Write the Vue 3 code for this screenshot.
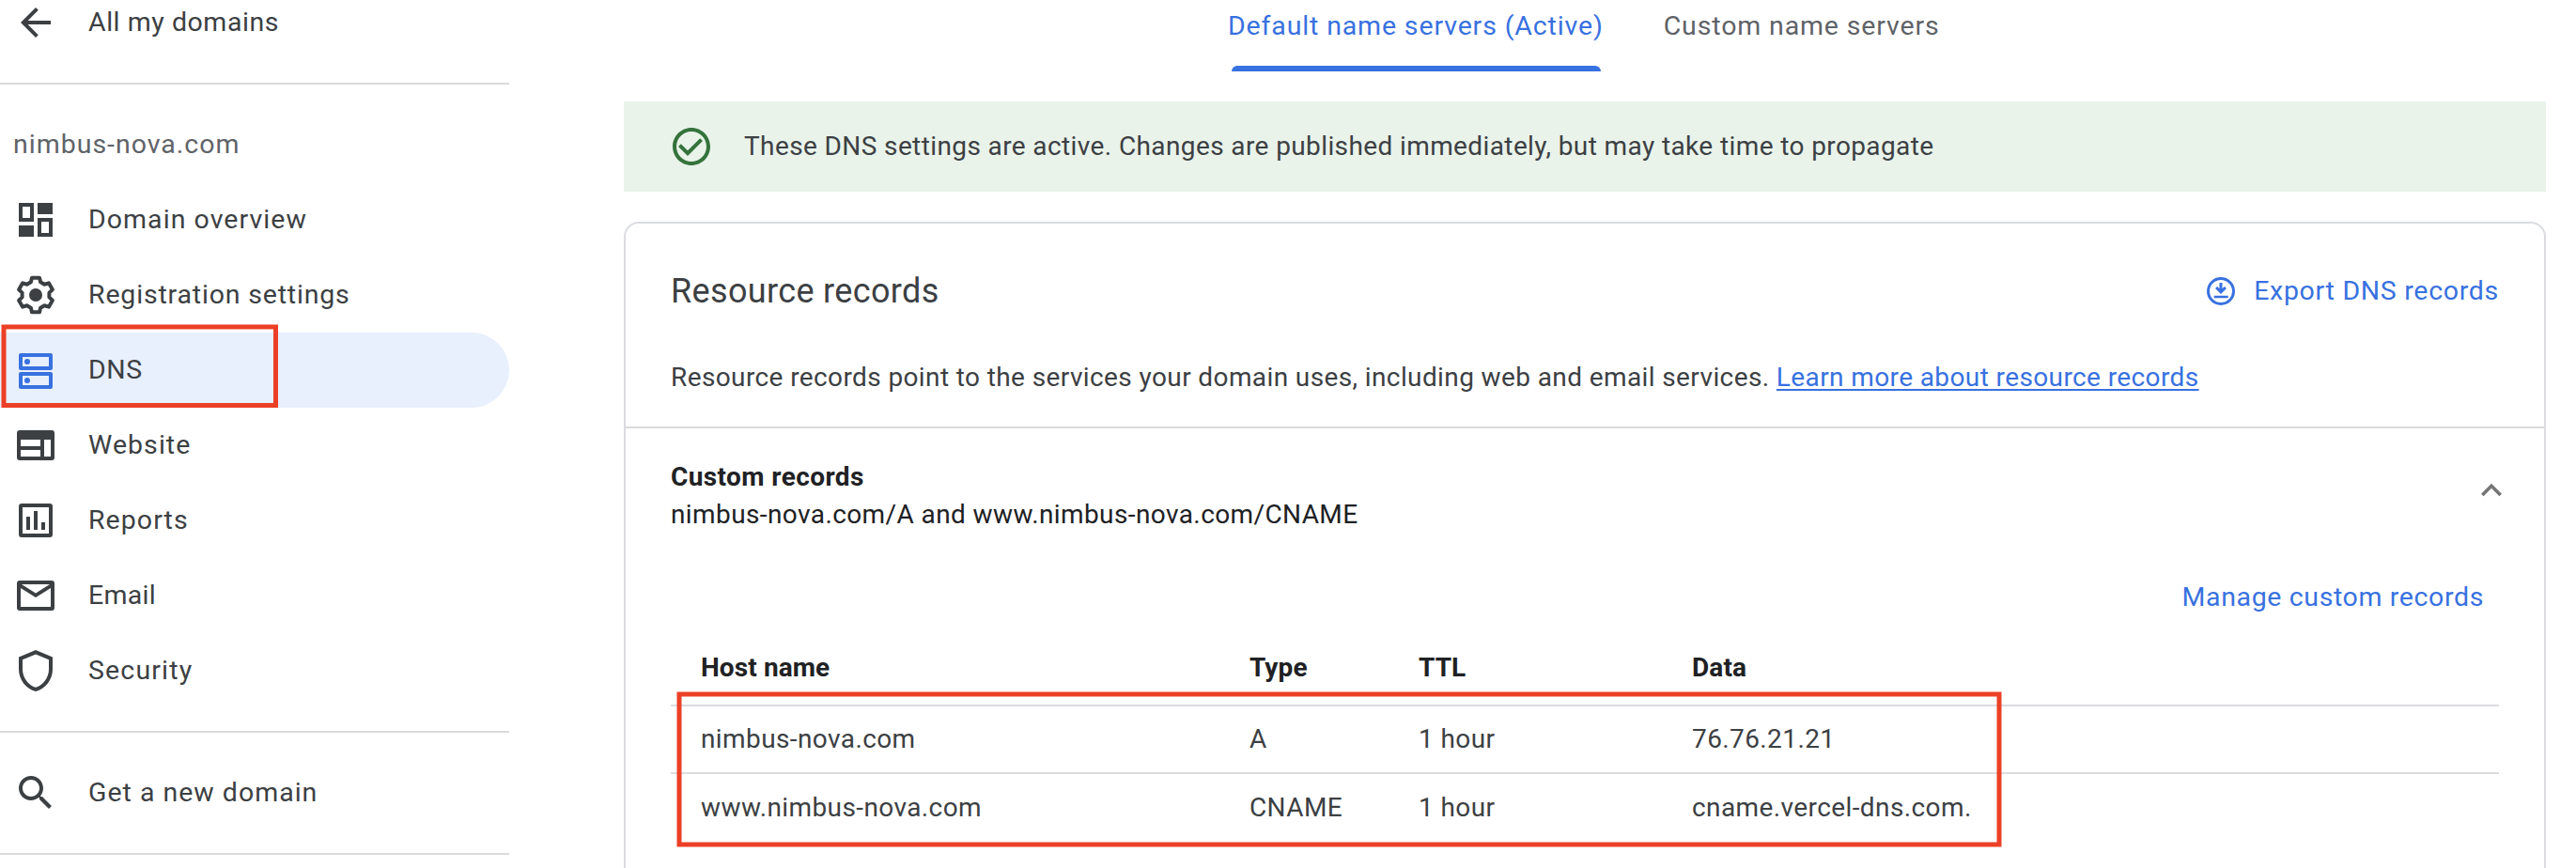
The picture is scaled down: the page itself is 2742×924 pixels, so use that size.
<script setup>
// Six-toothed cog outline, centred in the 24-unit icon box.
const cog = Array.from({ length: 6 }, (_, k) =>
  [[-20.5, 7.3], [-12.4, 9.4], [12.4, 9.4], [20.5, 7.3]].map(([a, r]) => {
    const t = ((k * 60 + a) * Math.PI) / 180
    return `${(12 + r * Math.sin(t)).toFixed(2)},${(12 - r * Math.cos(t)).toFixed(2)}`
  }).join(' ')
).join(' ')

const nav = [
  { id: 'overview', label: 'Domain overview' },
  { id: 'settings', label: 'Registration settings' },
  { id: 'dns', label: 'DNS', active: true },
  { id: 'website', label: 'Website' },
  { id: 'reports', label: 'Reports' },
  { id: 'email', label: 'Email' },
  { id: 'security', label: 'Security' },
]
const icons = {
  overview: 'M3 3h8v10H3zM5 5v6h4V5zM13 3h8v6h-8zM3 15h8v6H3zM13 11h8v10h-8zM15 13v6h4v-6z',
  dns: 'M4 3h16a1 1 0 0 1 1 1v7a1 1 0 0 1-1 1H4a1 1 0 0 1-1-1V4a1 1 0 0 1 1-1zM5 5v5h14V5zM7.5 6a1.5 1.5 0 1 0 0 3 1.5 1.5 0 0 0 0-3zM4 13h16a1 1 0 0 1 1 1v7a1 1 0 0 1-1 1H4a1 1 0 0 1-1-1v-7a1 1 0 0 1 1-1zM5 15v5h14v-5zM7.5 16a1.5 1.5 0 1 0 0 3 1.5 1.5 0 0 0 0-3z',
  website: 'M20.500 4h-17C2.500 4 2 4.500 2 5.500v13c0 1 .5 1.500 1.500 1.500h17c1 0 1.500-.5 1.500-1.500v-13c0-1-.5-1.500-1.500-1.500zM14.500 18H4v-3.500h10.500zM14.500 12.500H4V9h10.500zM20 18h-3.500V9H20z',
  reports: 'M19.500 3h-15C3.500 3 3 3.500 3 4.500v15c0 1 .5 1.500 1.500 1.500h15c1 0 1.500-.5 1.500-1.500v-15c0-1-.5-1.500-1.500-1.500zM19 19H5V5h14zM7 10h2v7H7zM11 7h2v10h-2zM15 13h2v4h-2z',
  email: 'M20.500 4h-17C2.500 4 2 4.500 2 5.500v13c0 1 .5 1.500 1.500 1.500h17c1 0 1.500-.5 1.500-1.500v-13c0-1-.5-1.500-1.500-1.500zM20 18H4V8l8 5 8-5zM12 10.700L4.500 6h15z',
  security: 'M12 1L3 4.700v6.500c0 5.400 3.800 10.500 9 11.800 5.200-1.300 9-6.400 9-11.800V4.700zM12 3.200l7 2.900v5.100c0 4.300-3 8.400-7 9.700-4-1.300-7-5.400-7-9.700V6.100z',
}
const records = [
  { host: 'nimbus-nova.com', type: 'A', ttl: '1 hour', data: '76.76.21.21' },
  { host: 'www.nimbus-nova.com', type: 'CNAME', ttl: '1 hour', data: 'cname.vercel-dns.com.' },
]
</script>

<template>
  <div class="page">
    <aside class="sidebar">
      <div class="item">
        <svg class="icon" viewBox="0 0 24 24"><path d="M20 11H7.830l5.590-5.590L12 4l-8 8 8 8 1.410-1.410L7.830 13H20z" /></svg>
        <span class="t-back">All my domains</span>
      </div>
      <hr />
      <div class="domain"><span>nimbus-nova.com</span></div>
      <nav>
        <div v-for="n in nav" :key="n.id" class="item" :class="{ active: n.active }">
          <svg v-if="n.id === 'settings'" class="icon" viewBox="0 0 24 24">
            <polygon class="cog" :points="cog" /><circle cx="12" cy="12" r="3.500" />
          </svg>
          <svg v-else class="icon" viewBox="0 0 24 24"><path fill-rule="evenodd" :d="icons[n.id]" /></svg>
          <span :class="'t-' + n.id">{{ n.label }}</span>
          <svg v-if="n.active" class="mark mark-nav" viewBox="0 0 296 90"><rect x="4" y="4" width="289.500" height="83.500" /></svg>
        </div>
      </nav>
      <hr />
      <div class="item">
        <svg class="icon" viewBox="0 0 24 24"><path d="M15.500 14h-.79l-.28-.27C15.410 12.590 16 11.110 16 9.500 16 5.910 13.090 3 9.500 3S3 5.910 3 9.500 5.910 16 9.500 16c1.610 0 3.090-.59 4.230-1.570l.27.28v.79l5 4.990L20.490 19l-4.990-5zm-6 0C7.010 14 5 11.990 5 9.500S7.010 5 9.500 5 14 7.010 14 9.500 11.990 14 9.500 14z" /></svg>
        <span class="t-get">Get a new domain</span>
      </div>
      <hr />
    </aside>

    <main>
      <div class="tabs">
        <div class="tab selected"><span>Default name servers (Active)</span></div>
        <div class="tab"><span>Custom name servers</span></div>
      </div>

      <div class="banner">
        <svg viewBox="0 0 24 24"><path d="M16.590 7.580L10 14.170l-3.590-3.580L5 12l5 5 8-8zM12 2C6.480 2 2 6.480 2 12s4.480 10 10 10 10-4.480 10-10S17.520 2 12 2zm0 18c-4.420 0-8-3.580-8-8s3.580-8 8-8 8 3.580 8 8-3.580 8-8 8z" /></svg>
        <span>These DNS settings are active. Changes are published immediately, but may take time to propagate</span>
      </div>

      <section class="card">
        <header>
          <div class="title-row">
            <h1>Resource records</h1>
            <a class="export">
              <svg viewBox="0 0 24 24"><path d="M12 2a10 10 0 1 0 0 20 10 10 0 0 0 0-20zm0 18a8 8 0 1 1 0-16 8 8 0 0 1 0 16zM11 6h2v4.200l1.600-1.600L16 10l-4 4-4-4 1.400-1.400 1.600 1.600zM7.100 15.200h10v1.600h-10z" /></svg>
              <span>Export DNS records</span>
            </a>
          </div>
          <p>Resource records point to the services your domain uses, including web and email services. <a class="learn">Learn more about resource records</a></p>
        </header>

        <div class="summary">
          <div>
            <h2>Custom records</h2>
            <div class="sub">nimbus-nova.com/A and www.nimbus-nova.com/CNAME</div>
          </div>
          <svg class="chev" viewBox="0 0 24 24"><path d="M12 8l-6 6 1.410 1.410L12 10.830l4.590 4.580L18 14z" /></svg>
        </div>

        <div class="manage"><span>Manage custom records</span></div>

        <div class="table">
          <div class="row head">
            <span>Host name</span><span>Type</span><span>TTL</span><span>Data</span>
          </div>
          <div v-for="r in records" :key="r.host" class="row">
            <span>{{ r.host }}</span><span>{{ r.type }}</span><span>{{ r.ttl }}</span><span>{{ r.data }}</span>
          </div>
          <svg class="mark mark-table" viewBox="0 0 1411 166"><rect x="3" y="3" width="1405" height="160" /></svg>
        </div>
      </section>
    </main>
  </div>
</template>

<style>
body { background: #fff; }
</style>

<style scoped>
.page {
  width: 2742px;
  height: 924px;
  overflow: hidden;
  display: flex;
  font-family: Roboto, "Liberation Sans", sans-serif;
  font-size: 28px;
  line-height: 40px;
  color: #3c4043;
  white-space: nowrap;
}
.sidebar { width: 542px; margin-top: -16px; flex: none; font-weight: 450; }
.item { position: relative; height: 80px; display: flex; align-items: center; padding-left: 14px; box-sizing: border-box; }
.item span { margin-left: 32px; font-size: 28.5px; letter-spacing: 1.050px; }
.item .t-back { letter-spacing: 0.550px; }
.item .t-settings { letter-spacing: 0.820px; }
.item .t-dns { letter-spacing: 0.550px; }
.item .t-email { letter-spacing: 0.3px; }
.item .t-security { letter-spacing: 1.150px; }
.item .t-get { letter-spacing: 1px; }
.icon { width: 48px; height: 48px; fill: #3c4043; flex: none; }
.cog { fill: none; stroke: #3c4043; stroke-width: 2; stroke-linejoin: round; }
.item.active { background: #e8effd; border-radius: 0 40px 40px 0; }
.active .icon { fill: #3871e0; }
hr { border: 0; height: 2px; background: #dadada; margin: 24px 0; }
.domain { margin-top: -24px; height: 104px; padding: 44px 0 0 14px; box-sizing: border-box; color: #5f6368; font-size: 28.5px; letter-spacing: 1px; }
nav { display: block; }
.mark { position: absolute; fill: none; stroke: #eb4026; stroke-width: 5px; }
.mark-nav { left: 0; top: -10px; width: 296px; height: 90px; }
.mark-table { left: 6px; top: 53px; width: 1411px; height: 166px; }

main { margin-left: 122px; width: 2046px; }
.tabs { height: 76px; display: flex; padding-left: 643px; gap: 64px; font-weight: 450; font-size: 28.5px; color: #5f6368; letter-spacing: 0.860px; }
.tab { display: flex; flex-direction: column; justify-content: space-between; padding-top: 8px; box-sizing: border-box; height: 76px; }
.selected { color: #3871e0; }
.selected::after { content: ""; height: 6px; margin: 0 3px 0 4px; background: #3871e0; border-radius: 6px 6px 0 0; }
.banner { margin-top: 32px; height: 96px; background: #e9f3ea; display: flex; align-items: center; padding-left: 48px; gap: 32px; box-sizing: border-box; letter-spacing: 0.390px; }
.banner svg { width: 48px; height: 48px; fill: #34733c; }
.card { margin-top: 32px; height: 720px; border: 2px solid #dadce0; border-radius: 16px; box-sizing: border-box; }
header { height: 218px; border-bottom: 2px solid #dadada; box-sizing: border-box; padding: 46px 48px 0 48px; }
.title-row { display: flex; justify-content: space-between; height: 52px; align-items: center; }
h1 { margin: 0; font-size: 36px; font-weight: 400; line-height: 48px; letter-spacing: 0.350px; }
.export { display: flex; align-items: center; gap: 17px; font-weight: 450; font-size: 28.5px; color: #3871e0; letter-spacing: 0.7px; }
.export svg { width: 36px; height: 36px; fill: #3871e0; }
p { margin: 46px 0 0; letter-spacing: 0.390px; }
.learn { color: #3871e0; text-decoration: underline; text-decoration-thickness: 2px; text-underline-offset: 3px; text-decoration-skip-ink: none; }
.summary { display: flex; justify-content: space-between; padding: 32px 34px 0 48px; color: #202124; letter-spacing: 0.4px; }
h2 { margin: 0; font-size: 28px; line-height: 40px; font-weight: 700; }
.chev { width: 44px; height: 44px; fill: #757575; margin-top: 12px; }
.manage { margin-top: 48px; padding-right: 64px; text-align: right; font-weight: 450; font-size: 28.5px; color: #3871e0; letter-spacing: 0.620px; }
.table { position: relative; margin: 27px 48px 0; }
.row { display: grid; grid-template-columns: 584px 180px 291px 1fr; padding-left: 32px; height: 72px; line-height: 70px; border-top: 2px solid #dadce0; box-sizing: border-box; letter-spacing: 0.4px; }
.row.head { height: 67px; line-height: 56px; border-top: 0; font-weight: 700; color: #202124; letter-spacing: 0.1px; }
.row:nth-child(3) { line-height: 72px; }
</style>
